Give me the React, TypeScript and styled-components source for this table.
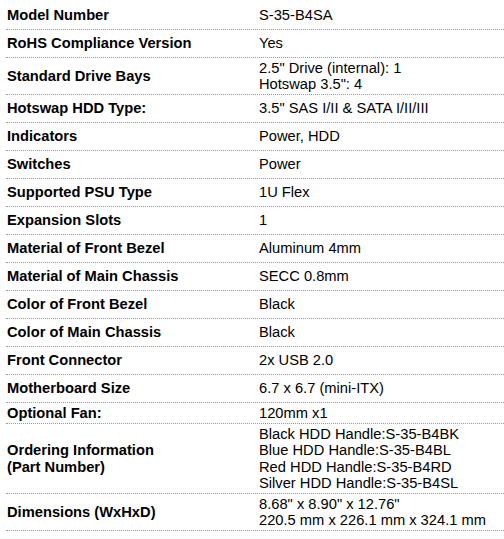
import styled, { createGlobalStyle } from 'styled-components';

const GlobalStyle = createGlobalStyle`
  html, body {
    margin: 0;
    padding: 0;
    background: #fff;
  }
  body {
    font-family: "Liberation Sans", Arial, sans-serif;
    color: #000;
  }
`;

const SpecTable = styled.div`
  display: flex;
  flex-direction: column;
  margin-left: 6px;
  padding-top: 2px;
`;

const Row = styled.div<{ $compact?: boolean }>`
  display: grid;
  grid-template-columns: 253px 1fr;
  align-items: center;
  min-height: ${p => (p.$compact ? '21px' : '28px')};
  padding: 1.5px 0;
  box-sizing: border-box;
  border-bottom: 1px dotted #9a9a9a;
`;

const Label = styled.div`
  padding-left: 1px;
  font-size: 14.7px;
  line-height: 16.5px;
  font-weight: bold;
`;

const Value = styled.div`
  font-size: 14.7px;
  line-height: 16.5px;
`;

type Spec = { label: string[]; value: string[]; compact?: boolean };

const specs: Spec[] = [
  { label: ['Model Number'], value: ['S-35-B4SA'] },
  { label: ['RoHS Compliance Version'], value: ['Yes'] },
  { label: ['Standard Drive Bays'], value: ['2.5" Drive (internal): 1', 'Hotswap 3.5": 4'] },
  { label: ['Hotswap HDD Type:'], value: ['3.5" SAS I/II & SATA I/II/III'] },
  { label: ['Indicators'], value: ['Power, HDD'] },
  { label: ['Switches'], value: ['Power'] },
  { label: ['Supported PSU Type'], value: ['1U Flex'] },
  { label: ['Expansion Slots'], value: ['1'] },
  { label: ['Material of Front Bezel'], value: ['Aluminum 4mm'] },
  { label: ['Material of Main Chassis'], value: ['SECC 0.8mm'] },
  { label: ['Color of Front Bezel'], value: ['Black'] },
  { label: ['Color of Main Chassis'], value: ['Black'] },
  { label: ['Front Connector'], value: ['2x USB 2.0'] },
  { label: ['Motherboard Size'], value: ['6.7 x 6.7 (mini-ITX)'] },
  { label: ['Optional Fan:'], value: ['120mm x1'], compact: true },
  {
    label: ['Ordering Information', '(Part Number)'],
    value: [
      'Black HDD Handle:S-35-B4BK',
      'Blue HDD Handle:S-35-B4BL',
      'Red HDD Handle:S-35-B4RD',
      'Silver HDD Handle:S-35-B4SL',
    ],
  },
  { label: ['Dimensions (WxHxD)'], value: ['8.68" x 8.90" x 12.76"', '220.5 mm x 226.1 mm x 324.1 mm'] },
];

export default function App() {
  return (
    <>
      <GlobalStyle />
      <SpecTable>
        {specs.map(s => (
          <Row key={s.label[0]} $compact={s.compact}>
            <Label>
              {s.label.map(l => (
                <div key={l}>{l}</div>
              ))}
            </Label>
            <Value>
              {s.value.map(v => (
                <div key={v}>{v}</div>
              ))}
            </Value>
          </Row>
        ))}
      </SpecTable>
    </>
  );
}
